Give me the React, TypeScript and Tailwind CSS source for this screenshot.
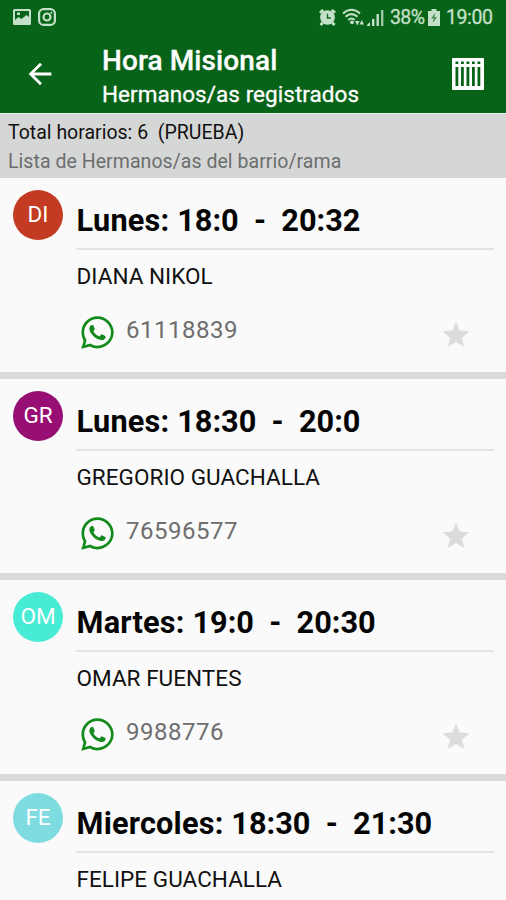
import { FaWhatsapp } from 'react-icons/fa'
import { MdArrowBack, MdStar } from 'react-icons/md'

type Horario = {
  iniciales: string
  dia: string
  inicio: string
  fin: string
  nombre: string
  telefono?: string
  color: string
}

const HORARIOS: Horario[] = [
  { iniciales: 'DI', dia: 'Lunes',     inicio: '18:0',  fin: '20:32', nombre: 'DIANA NIKOL',        telefono: '61118839', color: 'bg-[#c23b22]' },
  { iniciales: 'GR', dia: 'Lunes',     inicio: '18:30', fin: '20:0',  nombre: 'GREGORIO GUACHALLA', telefono: '76596577', color: 'bg-[#970f73]' },
  { iniciales: 'OM', dia: 'Martes',    inicio: '19:0',  fin: '20:30', nombre: 'OMAR FUENTES',       telefono: '9988776',  color: 'bg-[#48ecd5]' },
  { iniciales: 'FE', dia: 'Miercoles', inicio: '18:30', fin: '21:30', nombre: 'FELIPE GUACHALLA',   color: 'bg-[#7edbe0]' },
]

function StatusBar() {
  return (
    <div className="flex h-[34px] items-center justify-between px-[13px] text-[#c5e0c8]">
      <div className="flex items-center gap-[7px]">
        <svg width="18" height="16" viewBox="0 0 18 16">
          <path fillRule="evenodd" fill="currentColor" d="M1.500 0h15A1.500 1.500 0 0 1 18 1.500v13a1.500 1.500 0 0 1-1.500 1.500h-15A1.500 1.500 0 0 1 0 14.500v-13A1.500 1.500 0 0 1 1.500 0zM2 2v9l3.500-3 3 2L13.500 6l2.500 2V2zM4 3.500h3v2.500H4z" />
        </svg>
        <svg width="18" height="18" viewBox="0 0 18 18" fill="none" stroke="currentColor" strokeWidth="2.200">
          <rect x="1.100" y="1.100" width="15.800" height="15.800" rx="4.500" />
          <circle cx="9" cy="9" r="3.500" />
          <circle cx="13.300" cy="4.700" r="1" fill="currentColor" stroke="none" />
        </svg>
      </div>
      <div className="flex items-center">
        {/* alarma */}
        <svg width="17" height="17" viewBox="0 0 18 18">
          <path d="M1 4 4.500 1M17 4 13.500 1M4 14.500l-2.500 2.500M14 14.500l2.500 2.500" stroke="currentColor" strokeWidth="3" />
          <circle cx="9" cy="9" r="7.800" fill="currentColor" />
          <path d="M9 5v4.500h3.500" fill="none" stroke="#066317" strokeWidth="1.400" />
        </svg>
        {/* wifi */}
        <svg className="ml-[6px]" width="22" height="18" viewBox="0 0 22 18" fill="none" stroke="currentColor" strokeWidth="2">
          <path d="M1 5.500q8.500-7.500 17 0M3.500 8.800q6-5.300 12 0M6.300 12q3.200-3 6.400 0" />
          <circle cx="10" cy="14.300" r="1.900" fill="currentColor" stroke="none" />
          <path d="M13 13h4.500l-2.200 4.500zM17.500 16.500h4.500L19.800 12z" fill="currentColor" stroke="none" />
        </svg>
        {/* cobertura */}
        <svg className="ml-[3px]" width="17" height="17" viewBox="0 0 17 17" fill="currentColor">
          <path d="M0 17v-1l3-3v4zM5 10h2.400v7H5zM9.500 5h2.400v12H9.500z" />
          <path d="M14 1h2.400v16H14z" opacity=".8" />
        </svg>
        <span className="ml-[6px] mt-[2px] w-[34px] whitespace-nowrap text-[19.500px] leading-none tracking-[-0.600px] [-webkit-text-stroke:0.300px]">38%</span>
        <svg className="ml-[4px]" width="12" height="17" viewBox="0 0 12 17">
          <path d="M3.500 0h5v2H12v15H0V2h3.500z" fill="currentColor" />
          <path d="M7 4 3 9.500h2.500L5 14l4-6H6.500z" fill="#066317" opacity=".65" />
        </svg>
        <span className="ml-[6px] mt-[2px] w-[47px] whitespace-nowrap text-[19.500px] leading-none tracking-[-0.400px] [-webkit-text-stroke:0.300px]">19:00</span>
      </div>
    </div>
  )
}

function AppBar() {
  return (
    <div className="flex h-[79px] items-start pl-[23px] pr-[21px] text-white">
      <MdArrowBack className="mt-[23px] size-[34px] shrink-0" />
      <div className="ml-[45px] flex-1 whitespace-nowrap">
        <h1 className="mt-[10px] text-[28px] font-medium leading-[34px] tracking-[0.100px] [-webkit-text-stroke:0.300px]">Hora Misional</h1>
        <p className="text-[22.500px] leading-[32px] tracking-[0.040px] [-webkit-text-stroke:0.300px]">Hermanos/as registrados</p>
      </div>
      <svg className="mt-[23px] shrink-0" width="34" height="34" viewBox="0 0 34 34">
        <rect x="1" y="1" width="32" height="32" rx="1" fill="#fff" />
        {[4.5, 10, 15.5, 21, 26.5].map((x) => (
          <g key={x} fill="#066317">
            <rect x={x} y="4.500" width="2.800" height="2.500" />
            <rect x={x} y="10" width="2.800" height="19" />
          </g>
        ))}
      </svg>
    </div>
  )
}

function HorarioCard({ iniciales, dia, inicio, fin, nombre, telefono, color }: Horario) {
  return (
    <li className="flex h-[201px] shrink-0 border-b-[7px] border-[#dbdbdb] pl-[13px] pr-[12px]">
      <div className={`mt-[12px] flex size-[50px] shrink-0 items-center justify-center rounded-full text-[22.500px] text-white ${color}`}>
        {iniciales}
      </div>
      <div className="ml-[13px] flex-1">
        <h2 className="h-[72px] whitespace-pre border-b-2 border-[#e4e4e4] pl-[0.600px] pt-[25px] text-[30.700px] font-bold leading-[36px] text-[#050505]">
          <span className="tracking-[0.200px]">{`${dia}: `}</span>
          {`${inicio}  -  ${fin}`}
        </h2>
        <p className="mt-[12px] pl-[0.500px] text-[22.500px] leading-[28px] tracking-[0.040px] text-[#111]">{nombre}</p>
        {telefono && (
          <div className="mt-[19px] flex items-center pl-[3px]">
            <FaWhatsapp className="mt-[5px] size-[37px] text-[#138a1c]" />
            <span className="ml-[10px] flex-1 text-[24px] leading-[32px] tracking-[0.500px] text-[#6e6e6e]">{telefono}</span>
            <MdStar className="mr-[22px] mt-[10px] size-[32px] text-[#dcdcdc]" />
          </div>
        )}
      </div>
    </li>
  )
}

export default function App() {
  return (
    <div className="flex h-[900px] w-[506px] flex-col overflow-hidden bg-[#fafafa] font-['Roboto',sans-serif]">
      <header className="shrink-0 bg-[#066317]">
        <StatusBar />
        <AppBar />
      </header>
      <div className="h-[65px] shrink-0 whitespace-nowrap border-t border-[#eef3ee] bg-[#d5d7d6] pl-[8px] pt-[4px] text-[19.500px] leading-[29px]">
        <p className="whitespace-pre text-[#111]">Total horarios: 6  (PRUEBA)</p>
        <p className="tracking-[0.050px] text-[#6c6e6d]">Lista de Hermanos/as del barrio/rama</p>
      </div>
      <ul className="min-h-0 flex-1 overflow-hidden">
        {HORARIOS.map((h) => <HorarioCard key={h.nombre} {...h} />)}
      </ul>
    </div>
  )
}
